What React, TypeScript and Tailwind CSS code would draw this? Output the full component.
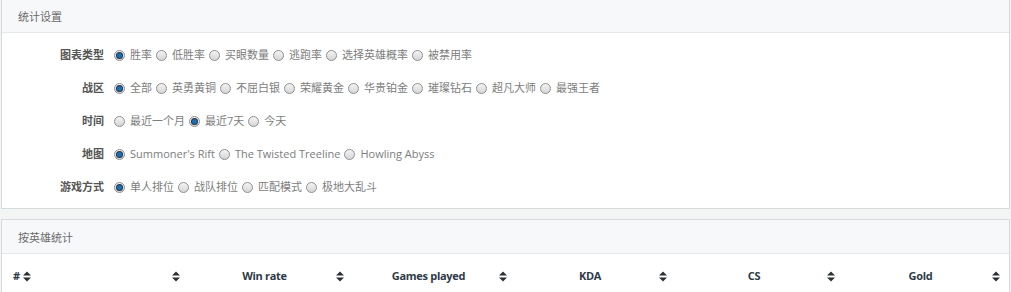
import React from "react";

const font = { fontFamily: '"Segoe UI", "Open Sans", "Noto Sans CJK SC", sans-serif' };

type Group = { label: string; options: string[]; checked: number };

const groups: Group[] = [
  { label: "图表类型", options: ["胜率", "低胜率", "买眼数量", "逃跑率", "选择英雄概率", "被禁用率"], checked: 0 },
  { label: "战区", options: ["全部", "英勇黄铜", "不屈白银", "荣耀黄金", "华贵铂金", "璀璨钻石", "超凡大师", "最强王者"], checked: 0 },
  { label: "时间", options: ["最近一个月", "最近7天", "今天"], checked: 1 },
  { label: "地图", options: ["Summoner's Rift", "The Twisted Treeline", "Howling Abyss"], checked: 0 },
  { label: "游戏方式", options: ["单人排位", "战队排位", "匹配模式", "极地大乱斗"], checked: 0 },
];

function Radio({ on }: { on: boolean }) {
  return (
    <span className="flex h-[11px] w-[11px] shrink-0 items-center justify-center rounded-full border border-[#8f8f8f] bg-gradient-to-b from-[#f4f4f4] to-[#d6d6d6]">
      {on && (
        <span className="h-[5px] w-[5px] rounded-full bg-[#1a6fb0] ring-1 ring-[#23344a]" />
      )}
    </span>
  );
}

function SortIcon() {
  return (
    <svg width="8" height="11" viewBox="0 0 8 11" className="shrink-0">
      <path d="M0 4.5 L4 0.5 L8 4.5 Z" fill="#2b2f33" />
      <path d="M0 6.5 L4 10.5 L8 6.5 Z" fill="#2b2f33" />
    </svg>
  );
}

const cols = [
  { title: "Win rate", w: "w-[165px]" },
  { title: "Games played", w: "w-[163px]" },
  { title: "KDA", w: "w-[160px]" },
  { title: "CS", w: "w-[168px]" },
  { title: "Gold", w: "w-[165px]" },
];

export default function App() {
  return (
    <div className="h-[292px] w-[1011px] overflow-hidden bg-[#f3f4f4] pl-[1px] pr-[1px] text-[11px]" style={font}>
      <section className="mt-[-1px] border border-[#d5dadd] bg-white">
        <div className="flex h-[33px] items-center border-b border-[#e6e9eb] bg-[#f7f8fa] pl-[16px] pt-[2px] text-[#6b6b6b]">
          统计设置
        </div>
        <div className="pb-[4px] pt-[6px]">
          {groups.map((g) => (
            <div key={g.label} className="flex h-[33px] items-center">
              <div className="w-[102px] shrink-0 text-right font-bold text-[#555]">{g.label}</div>
              <div className="ml-[10px] flex items-center">
                {g.options.map((o, i) => (
                  <div key={o} className="mr-[4px] flex items-center gap-[5px]">
                    <Radio on={i === g.checked} />
                    <span className="text-[#7d7d7d]">{o}</span>
                  </div>
                ))}
              </div>
            </div>
          ))}
        </div>
      </section>

      <section className="mt-[10px] border border-[#d5dadd] bg-white">
        <div className="flex h-[34px] items-center border-b border-[#e6e9eb] bg-[#f7f8fa] pl-[16px] pt-[4px] text-[#6b6b6b]">
          按英雄统计
        </div>
        <div className="flex h-[42px] items-center pt-[2px] font-bold tracking-[-0.3px] text-[#2e3a48]">
          <div className="flex w-[30px] items-center gap-[3px] pl-[11px]">
            <span>#</span>
            <SortIcon />
          </div>
          <div className="flex w-[153px] justify-end pr-[5px]">
            <SortIcon />
          </div>
          {cols.map((c) => (
            <div key={c.title} className={`relative flex items-center justify-center pr-[6px] ${c.w}`}>
              <span>{c.title}</span>
              <span className="absolute right-[6px] flex">
                <SortIcon />
              </span>
            </div>
          ))}
        </div>
      </section>
    </div>
  );
}
